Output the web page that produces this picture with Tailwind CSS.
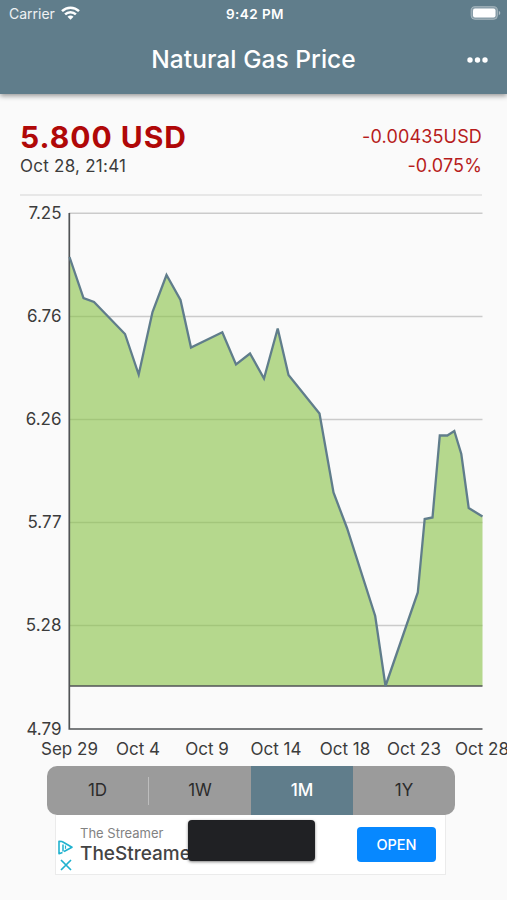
<!DOCTYPE html>
<html lang="en">
<head>
<meta charset="UTF-8" />
<meta name="viewport" content="width=device-width, initial-scale=1" />
<title>Natural Gas Price</title>
<script src="https://cdn.jsdelivr.net/npm/@tailwindcss/browser@4"></script>
</head>
<body class="h-[900px] w-[507px] overflow-hidden bg-[#fafafa] font-['Inter',sans-serif] text-[#3c3c3c] flex flex-col">

<!-- App bar -->
<header class="h-[94px] shrink-0 bg-[#607d8b] text-white shadow-[0_2px_5px_rgba(0,0,0,0.4)]">
  <div class="grid grid-cols-3 items-center h-7 pl-[9px] pr-[6px]">
    <div class="flex items-center gap-[6px] h-5 -mt-[2px] text-[14px] text-white/90">
      <span>Carrier</span>
      <svg class="w-[19px] h-[14px]" viewBox="0 0 19 14" fill="none" stroke="white" stroke-width="2.5">
        <path d="M1 5.2C5.8.6 13.2.6 18 5.2" />
        <path d="M4.1 8.3c3-2.9 7.8-2.9 10.8 0" />
        <path d="M9.5 13.8 6.5 10.7c1.7-1.6 4.3-1.6 6 0Z" fill="white" stroke="none" />
      </svg>
    </div>
    <div class="text-center text-[13.5px] font-semibold tracking-[0.45px] whitespace-nowrap">9:42 PM</div>
    <svg class="w-[31px] h-[14px] -mt-[2px] justify-self-end" viewBox="0 0 31 14">
      <rect x="1" y="0.6" width="26.5" height="12.8" rx="4" fill="white" fill-opacity="0.25" stroke="white" stroke-opacity="0.3" />
      <rect x="3" y="2.6" width="22.5" height="8.8" rx="2" fill="white" />
      <path d="M28.8 4.8c2 .8 2 3.6 0 4.4Z" fill="white" fill-opacity="0.5" />
    </svg>
  </div>
  <div class="relative flex items-center justify-center h-[63px]">
    <h1 class="text-[24.5px] font-medium tracking-[0.05px]">Natural Gas Price</h1>
    <svg class="absolute right-[19px] top-[28px] w-[21px] h-2" viewBox="0 0 21 8" fill="white">
      <circle cx="3" cy="4" r="2.7" />
      <circle cx="10.5" cy="4" r="2.7" />
      <circle cx="18" cy="4" r="2.7" />
    </svg>
  </div>
</header>

<!-- Quote -->
<section class="mx-5 mr-[25px] h-[102px] shrink-0 pt-[25px] flex justify-between border-b-2 border-[#e7e7e7]">
  <div>
    <div class="h-9 leading-9 text-[30px] font-bold tracking-[1px] text-[#b00808]">5.800 USD</div>
    <div class="h-6 leading-[22px] text-[17px] tracking-[0.25px]">Oct 28, 21:41</div>
  </div>
  <div class="text-right text-[18px] tracking-[0.15px] text-[#b71c1c]">
    <div class="h-9 leading-[35px]">-0.00435USD</div>
    <div class="h-6 leading-[22px]">-0.075%</div>
  </div>
</section>

<!-- Price chart -->
<svg class="w-[507px] h-[570px] shrink-0" viewBox="0 196 507 570">
  <g stroke="#cbcbcb" stroke-width="1.5">
    <path d="M69 213.3H482.5" />
    <path d="M69 316.5H482.5" />
    <path d="M69 419.6H482.5" />
    <path d="M69 522.6H482.5" />
    <path d="M69 625.6H482.5" />
  </g>
  <path fill="#8bc34a" fill-opacity="0.62" d="M69.500 257L83.500 298L94 302L125 334L138.700 374.500L152.500 312L166.500 275L180.500 300L191 347.500L222.300 332.300L236 364.500L250 353.500L264 378.500L277.700 328.500L288.500 375L319.500 413.500L333.500 492.500L347 528L375.200 616L385.500 686L417.800 592.500L424.700 519L432.500 517.500L439.800 435.500L447.300 435.500L454.300 431L461.300 454L468.700 508L482.500 516.500V686H69.500Z" />
  <path d="M69.300 213V729H482.500M69.300 686H482.500" fill="none" stroke="#505355" stroke-width="1.7" />
  <path fill="none" stroke="#607d8b" stroke-width="2.300" d="M69.500 257L83.500 298L94 302L125 334L138.700 374.500L152.500 312L166.500 275L180.500 300L191 347.500L222.300 332.300L236 364.500L250 353.500L264 378.500L277.700 328.500L288.500 375L319.500 413.500L333.500 492.500L347 528L375.200 616L385.500 686L417.800 592.500L424.700 519L432.500 517.500L439.800 435.500L447.300 435.500L454.300 431L461.300 454L468.700 508L482.500 516.500" />
  <g fill="#3c3c3c" font-size="17" text-anchor="end">
    <text x="61.500" y="219.300">7.25</text>
    <text x="61.500" y="322.300">6.76</text>
    <text x="61.500" y="425.300">6.26</text>
    <text x="61.500" y="528.300">5.77</text>
    <text x="61.500" y="631.300">5.28</text>
    <text x="61.500" y="735">4.79</text>
  </g>
  <g fill="#3c3c3c" font-size="17" text-anchor="middle">
    <text x="69.500" y="755">Sep 29</text>
    <text x="138" y="755">Oct 4</text>
    <text x="207" y="755">Oct 9</text>
    <text x="276" y="755">Oct 14</text>
    <text x="345" y="755">Oct 18</text>
    <text x="414" y="755">Oct 23</text>
    <text x="482" y="755">Oct 28</text>
  </g>
</svg>

<!-- Range switch -->
<nav class="ml-[47px] w-[408px] h-[49px] shrink-0 grid grid-cols-4 items-center text-center text-[17px] text-[#2b2b2b] rounded-[10px] overflow-hidden bg-[#9b9b9b]">
  <button class="h-7 border-r border-[#bdbdbd]">1D</button>
  <button class="h-7">1W</button>
  <button class="h-full bg-[#607d8b] text-white font-medium">1M</button>
  <button class="h-7">1Y</button>
</nav>

<!-- Ad banner -->
<aside class="relative ml-[55px] w-[391px] h-[60px] shrink-0 flex items-center bg-white border border-t-0 border-[#ebebeb]">
  <div class="ml-[2px] mt-[22px] flex flex-col gap-[4px] items-center">
    <svg class="w-[15px] h-[15px]" viewBox="0 0 15 15" fill="none" stroke="#20b2cf" stroke-width="1.6" stroke-linejoin="round">
      <path d="M4 1.500 1 1.200V13.800L4.500 12.500M4 1.500 14 7.200 6 11.500" />
      <path d="M5 4.500V11.500" stroke-width="1.500" />
      <path d="M7.500 5.500V8.800" stroke-width="1.200" />
    </svg>
    <svg class="w-3 h-3" viewBox="0 0 12 12" stroke="#20b2cf" stroke-width="1.7">
      <path d="M1 1 11 11M11 1 1 11" />
    </svg>
  </div>
  <div class="ml-[7px] h-full pt-[9px]">
    <div class="h-[18px] leading-[18px] text-[13px] text-[#828282]">The Streamer</div>
    <div class="h-[24px] leading-[24px] text-[19px] font-medium text-[#444]">TheStreamer</div>
  </div>
  <div class="absolute left-[132px] top-[5px] w-[127px] h-[41px] rounded-[4px] bg-[#202124] shadow-[0_1px_3px_rgba(0,0,0,0.5)]"></div>
  <button class="absolute right-[9px] top-[12px] w-[79px] h-[35px] rounded-[4px] bg-[#0788ff] text-white text-[14.5px] font-medium">OPEN</button>
</aside>

</body>
</html>
